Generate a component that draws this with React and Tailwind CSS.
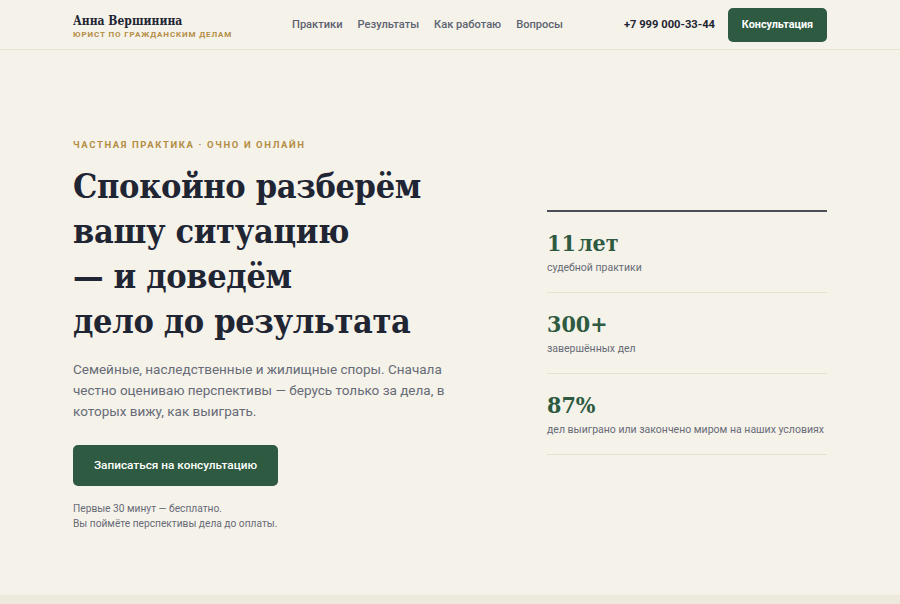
export default function App() {
  const serif = { fontFamily: '"DejaVu Serif Condensed", "DejaVu Serif", serif', fontStretch: "condensed" };
  const stats = [
    { n: "11 лет", l: "судебной практики" },
    { n: "300+", l: "завершённых дел" },
    { n: "87%", l: "дел выиграно или закончено миром на наших условиях" },
  ];
  return (
    <div className="min-h-[604px] bg-[#f5f2ea] text-[#1f2533]" style={{ fontFamily: 'Roboto, "Noto Sans", sans-serif' }}>
      <header className="h-[50px] border-b border-[#e8e3d3]">
        <div className="mx-auto flex h-full w-[754px] items-center">
          <div className="flex w-[219px] flex-col whitespace-nowrap pt-[3px]">
            <span className="text-[12px] font-bold leading-[16px] text-[#1f2533]" style={serif}>Анна Вершинина</span>
            <span className="mt-[1px] text-[8px] font-bold uppercase leading-[10px] tracking-[0.11em] text-[#b38d45]">Юрист по гражданским делам</span>
          </div>
          <nav className="flex gap-[15px] whitespace-nowrap pt-[1px] text-[11.1px] font-medium text-[#5d6270]">
            <span>Практики</span>
            <span>Результаты</span>
            <span>Как работаю</span>
            <span>Вопросы</span>
          </nav>
          <span className="ml-auto whitespace-nowrap pt-[1px] text-[11.2px] font-bold text-[#1f2533]">+7 999 000-33-44</span>
          <button className="ml-[13px] mt-[1px] h-[34px] w-[99px] whitespace-nowrap rounded-[5px] bg-[#2d5a40] text-[10.8px] font-bold text-white">Консультация</button>
        </div>
      </header>
      <section className="flex h-[546px] items-center border-b border-[#ece7d9] pt-[24px]">
        <div className="mx-auto flex w-[754px] items-center justify-between">
          <div className="w-[400px]">
            <div className="text-[9.5px] font-bold uppercase tracking-[0.17em] text-[#b38d45]">Частная практика · очно и онлайн</div>
            <h1 className="mt-[12px] whitespace-nowrap text-[34px] font-bold leading-[45px] tracking-[-0.01em] text-[#1f2533]" style={serif}>
              Спокойно разберём<br />вашу ситуацию<br />— и доведём<br />дело до результата
            </h1>
            <p className="mt-[15px] whitespace-nowrap text-[13.5px] leading-[21px] text-[#676b77]">
              Семейные, наследственные и жилищные споры. Сначала<br />честно оцениваю перспективы — берусь только за дела, в<br />которых вижу, как выиграть.
            </p>
            <button className="mt-[23px] h-[41px] w-[205px] rounded-[5px] bg-[#2d5a40] text-[11.8px] font-medium text-white">Записаться на консультацию</button>
            <p className="mt-[15px] text-[10.2px] leading-[15px] text-[#676b77]">Первые 30 минут — бесплатно.<br />Вы поймёте перспективы дела до оплаты.</p>
          </div>
          <div className="-mt-[4px] w-[280px] border-t-2 border-[#4a4f58]">
            {stats.map((s) => (
              <div key={s.n} className="flex h-[81px] flex-col border-b border-[#e6e1cf] pt-[18px]">
                <span className="text-[23px] font-bold leading-[26px] text-[#2d5a40] [word-spacing:-5px]" style={serif}>{s.n}</span>
                <span className="mt-[5px] whitespace-nowrap text-[10.5px] leading-[14px] text-[#676b77]">{s.l}</span>
              </div>
            ))}
          </div>
        </div>
      </section>
      <div className="h-[8px] bg-[#ede9dd]" />
    </div>
  );
}
